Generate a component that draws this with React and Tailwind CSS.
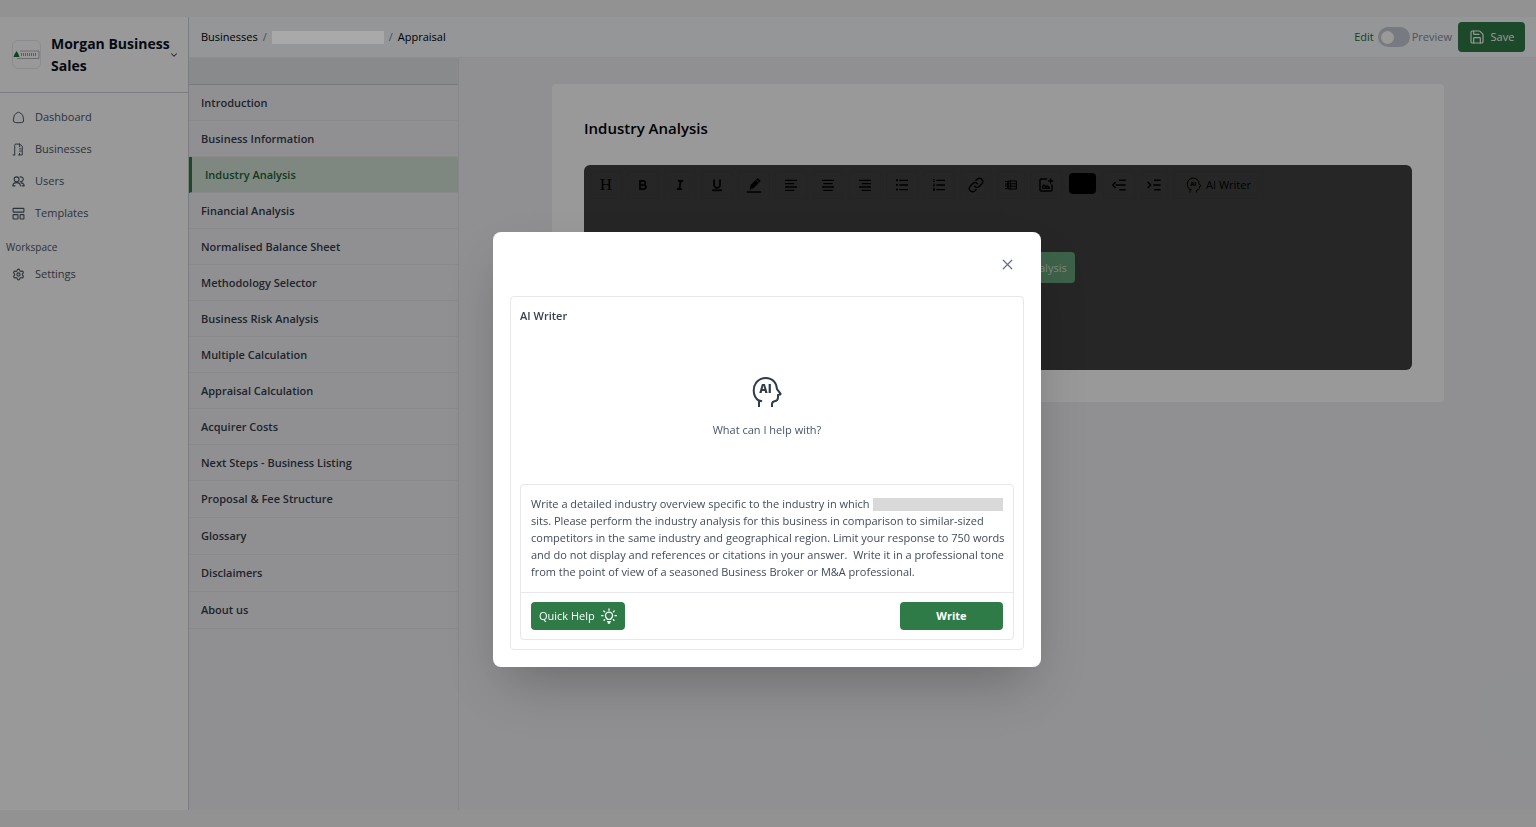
import { useState } from "react";
import { ChevronDown, Save, X, Settings } from "lucide-react";
import {
  RiAlignCenter,
  RiAlignLeft,
  RiAlignRight,
  RiBold,
  RiItalic,
  RiListOrdered,
  RiListUnordered,
  RiUnderline,
} from "react-icons/ri";

const PROMPT = `Write a detailed industry overview specific to the industry in which
sits. Please perform the industry analysis for this business in comparison to similar-sized
competitors in the same industry and geographical region. Limit your response to 750 words
and do not display and references or citations in your answer.  Write it in a professional tone
from the point of view of a seasoned Business Broker or M&A professional.`;

const sections = [
  { name: "Introduction" },
  { name: "Business Information" },
  { name: "Industry Analysis" },
  { name: "Financial Analysis" },
  { name: "Normalised Balance Sheet" },
  { name: "Methodology Selector" },
  { name: "Business Risk Analysis" },
  { name: "Multiple Calculation" },
  { name: "Appraisal Calculation" },
  { name: "Acquirer Costs" },
  { name: "Next Steps - Business Listing" },
  { name: "Proposal & Fee Structure", tall: true },
  { name: "Glossary", tall: true },
  { name: "Disclaimers", tall: true },
  { name: "About us", tall: true },
];

function Icon({ children, className = "size-4", viewBox = "0 0 24 24", width = 2 }) {
  return (
    <svg
      className={className}
      viewBox={viewBox}
      fill="none"
      stroke="currentColor"
      strokeWidth={width}
      strokeLinecap="round"
      strokeLinejoin="round"
      aria-hidden="true"
    >
      {children}
    </svg>
  );
}

const HomeIcon = () => (
  <Icon className="size-[13px]" width={1.8}>
    <path d="M10 2.900a3.400 3.400 0 0 1 4 0l4.500 3.300A4 4 0 0 1 20 9l1.500 7.500a4.500 4.500 0 0 1-4.500 5H7a4.500 4.500 0 0 1-4.500-5L4 9a4 4 0 0 1 1.500-2.800z" />
  </Icon>
);

const BuildingIcon = () => (
  <Icon className="size-[13px]" width={1.8}>
    <path d="M2 22h3M5 22V4a2 2 0 0 1 2-2h7l5 4v16h-7M14 2v5M14 11h3M14 15h3M14 19v3" />
  </Icon>
);

const UsersIcon = () => (
  <Icon className="size-[13px]">
    <circle cx="8.500" cy="8" r="4.500" />
    <path d="M1.500 20c0-4 3-6 7-6s7 2 7 6M1.500 20h4M15 3.700a4.500 4.500 0 1 1 0 8.600M17 14.500c3.500.5 5.500 2.500 5.500 5.500h-4" />
  </Icon>
);

const TemplatesIcon = () => (
  <Icon className="size-[13px]">
    <rect x="2" y="2.500" width="20" height="7" rx="1" />
    <rect x="2" y="14" width="9" height="8" rx="1" />
    <rect x="15" y="14" width="7" height="8" rx="1" />
  </Icon>
);

function AiHead({ className }) {
  return (
    <svg className={className} viewBox="0 0 30 32" fill="none" aria-hidden="true">
      <path
        d="M7 31v-6.500l3 .8M7 24.800C3.500 22.500 1.700 18.800 1.700 14.500 1.700 7.300 7 2 13.800 2c6.700 0 11 4.800 11.200 11.200l3.300 4.200c.4.6.2 1-.4 1.200L26 19v2.500c0 2.300-1.300 3.500-3.500 3.800-1.700.3-2.500 1.200-2.500 2.900V31"
        stroke="currentColor"
        strokeWidth="2"
        strokeLinejoin="round"
      />
      <text x="13.500" y="17" textAnchor="middle" fontFamily="Open Sans" fontWeight="800" fontSize="11.500" fill="currentColor">
        AI
      </text>
    </svg>
  );
}

const BulbIcon = () => (
  <Icon className="size-4" width={2}>
    <path d="M9.500 17c0-1.500-2.800-2.300-2.800-5.500a5.300 5.300 0 0 1 10.600 0c0 3.200-2.800 4-2.800 5.500zM10 20.500h4M11 22.500h2M12 1.500v1.800M4.200 4.500l1.300 1.300M19.800 4.500l-1.300 1.300M1 11.500h2M21 11.500h2M4.500 18.500l1-1M19.500 18.500l-1-1" />
  </Icon>
);

const LinkIcon = () => (
  <Icon width={2.2}>
    <path d="M10 14a5 5 0 0 0 7 0l4-4a5 5 0 0 0-7-7l-2 2M14 10a5 5 0 0 0-7 0l-4 4a5 5 0 0 0 7 7l2-2" />
  </Icon>
);

const PenIcon = () => (
  <Icon>
    <path d="M2 22.500h20" />
    <path d="M6 18l1.500-6 7-7 4 4-7 7zM16 3.500l1.500-1.500 4 4L20 7.500z" fill="currentColor" strokeWidth="1" />
  </Icon>
);

const TableIcon = () => (
  <Icon className="size-3" width={2.4}>
    <rect x="6" y="4" width="17" height="16" rx="2" />
    <path d="M6 9.500h17M6 14.500h17M11 4v16M1 5h5M1 10h5M1 14h5M1 19h5" />
  </Icon>
);

const ImageIcon = () => (
  <Icon width={2.2}>
    <path d="M13 3H5a2 2 0 0 0-2 2v14a2 2 0 0 0 2 2h14a2 2 0 0 0 2-2v-7M19 3v6M16 6h6M7 17v-3l2-2 3 3 2-2 3 3v1z" />
  </Icon>
);

const OutdentIcon = () => (
  <Icon width={2.2}>
    <path d="M7 7.500L2.500 12 7 16.500M12 5h10M13 12h7M7 12h15M12 19h10" strokeLinecap="butt" />
  </Icon>
);

const IndentIcon = () => (
  <Icon width={2.2}>
    <path d="M2.500 7.500L7 12l-4.500 4.500M12 5h10M11 12h11M12 19h10" strokeLinecap="butt" />
  </Icon>
);

function ToolButton({ label, narrow, children }) {
  return (
    <button
      type="button"
      aria-label={label}
      className={`flex h-7 items-center justify-center rounded border border-black/5 ${narrow ? "w-7" : "w-8"}`}
    >
      {children}
    </button>
  );
}

function NavLink({ icon, children }) {
  return (
    <a href="#" className="flex h-8 items-center gap-[10px] pl-3 text-[#4b5563]">
      {icon}
      {children}
    </a>
  );
}

function Sidebar() {
  return (
    <aside className="w-[189px] shrink-0 border-r border-[#cfd1d6] bg-white">
      <button type="button" className="flex h-[76px] w-full items-center border-b border-[#cfd1d6] pl-3 text-left">
        <span className="mr-[10px] flex size-[29px] shrink-0 items-center justify-center rounded-md border border-[#e8eaee]">
          <svg viewBox="0 0 27 10" className="w-[27px]" aria-hidden="true">
            <path d="M3.500 1l1.800 3 1.200 3H.5l1.200-3z" fill="#1d6b3c" />
            <path d="M4 8.500h22V1H7" fill="none" stroke="#a3a3a3" strokeWidth=".8" />
            <path d="M8.500 3v3m2-3v3m2-3v3m2-3v3m2-3v3m2-3v3m2-3v3m2-3v3" stroke="#999" strokeWidth="1" />
          </svg>
        </span>
        <span className="w-[118px] text-[14px] leading-[22px] font-bold whitespace-nowrap text-[#0b1223]">
          Morgan Business
          <br />
          Sales
        </span>
        <ChevronDown className="size-[10px] shrink-0 text-[#374151]" strokeWidth={2.5} />
      </button>
      <nav className="pt-2">
        <NavLink icon={<HomeIcon />}>Dashboard</NavLink>
        <NavLink icon={<BuildingIcon />}>Businesses</NavLink>
        <NavLink icon={<UsersIcon />}>Users</NavLink>
        <NavLink icon={<TemplatesIcon />}>Templates</NavLink>
        <p className="mt-2 mb-px pl-[6px] text-[10px] leading-5 text-[#4b5563]">Workspace</p>
        <NavLink icon={<Settings className="size-[13px]" />}>Settings</NavLink>
      </nav>
    </aside>
  );
}

function Header() {
  const [preview, setPreview] = useState(false);
  return (
    <header className="flex h-[41px] shrink-0 items-center justify-between border-b border-[#e9ebf0] bg-[#f8fafc] pr-[11px] pl-3">
      <nav aria-label="Breadcrumb" className="flex items-center gap-[5px] text-black">
        <a href="#">Businesses</a>
        <span className="text-[#7b8190]">/</span>
        <span className="relative z-30 h-[13px] w-28 bg-[#a8a9a8]" />
        <span className="text-[#7b8190]">/</span>
        <a href="#">Appraisal</a>
      </nav>
      <div className="flex items-center">
        <label htmlFor="preview" className="text-[#1f6b3b]">Edit</label>
        <span className="relative mr-[2px] ml-1 flex h-5 w-8">
          <input
            id="preview"
            type="checkbox"
            role="switch"
            checked={preview}
            onChange={() => setPreview(!preview)}
            className="peer h-5 w-8 appearance-none rounded-full bg-[#c6cbd8]"
          />
          <span className="pointer-events-none absolute top-1 left-[3px] size-[13px] rounded-full bg-white peer-checked:left-4" />
        </span>
        <label htmlFor="preview" className="text-[#858b99]">Preview</label>
        <button type="button" className="ml-[6px] flex h-[30px] w-[67px] items-center justify-center gap-[6px] rounded bg-[#2e7b47] text-white">
          <Save className="size-4" strokeWidth={1.75} />
          Save
        </button>
      </div>
    </header>
  );
}

function SectionNav() {
  const [active, setActive] = useState("Industry Analysis");
  return (
    <nav className="w-[270px] shrink-0 border-r border-[#e0e1e6]">
      <div className="h-[27px] border-b border-[#c9cbd0] bg-[#e4e6ea]" />
      {sections.map((s) => (
        <button
          key={s.name}
          type="button"
          onClick={() => setActive(s.name)}
          className={`flex w-full items-center border-b border-[#e6e6eb] font-semibold ${s.tall ? "h-[37px]" : "h-9"} ${
            s.name === active ? "border-l-[3px] border-l-[#2e7b47] bg-[#d2e3d5] pl-[13px] text-[#1f5f38]" : "pl-3 text-[#343b4a]"
          }`}
        >
          {s.name}
        </button>
      ))}
    </nav>
  );
}

function Editor() {
  return (
    <main className="relative min-w-0 flex-1 overflow-hidden pt-[26px] pr-[92px] pl-[93px]">
      <section className="rounded bg-white p-8">
        <h1 className="text-[15px] leading-6 font-semibold text-black">Industry Analysis</h1>
        <div className="mt-[25px] h-[205px] rounded-md bg-[#404040] pt-[6px] text-black">
          <div className="flex items-center gap-[5px] pl-[6px]">
            <ToolButton label="Heading">
              <span className="font-['Liberation_Serif'] text-[17px]">H</span>
            </ToolButton>
            <ToolButton label="Bold"><RiBold className="size-[14px]" stroke="currentColor" strokeWidth="1" /></ToolButton>
            <ToolButton label="Italic"><RiItalic className="size-[14px]" stroke="currentColor" strokeWidth="1" /></ToolButton>
            <ToolButton label="Underline"><RiUnderline className="size-[14px]" stroke="currentColor" strokeWidth="1" /></ToolButton>
            <ToolButton label="Highlight"><PenIcon /></ToolButton>
            <ToolButton label="Align left"><RiAlignLeft className="size-4" /></ToolButton>
            <ToolButton label="Align center"><RiAlignCenter className="size-4" /></ToolButton>
            <ToolButton label="Align right"><RiAlignRight className="size-4" /></ToolButton>
            <ToolButton label="Bullet list"><RiListUnordered className="size-4" /></ToolButton>
            <ToolButton label="Numbered list"><RiListOrdered className="size-4" /></ToolButton>
            <ToolButton label="Link"><LinkIcon /></ToolButton>
            <ToolButton label="Table" narrow><TableIcon /></ToolButton>
            <ToolButton label="Image"><ImageIcon /></ToolButton>
            <input
              type="color"
              aria-label="Text colour"
              defaultValue="#000000"
              className="mx-[2px] mb-1 h-[21px] w-[27px] overflow-hidden rounded-sm [&::-webkit-color-swatch]:border-0 [&::-webkit-color-swatch-wrapper]:p-0"
            />
            <ToolButton label="Outdent"><OutdentIcon /></ToolButton>
            <ToolButton label="Indent" narrow><IndentIcon /></ToolButton>
            <button type="button" className="flex h-7 items-center gap-1 rounded border border-black/5 px-3 whitespace-nowrap">
              <AiHead className="size-4" />
              AI Writer
            </button>
          </div>
          <div className="mt-[53px] flex justify-center">
            <button type="button" className="h-[31px] w-[153px] rounded bg-[#66a37a] whitespace-nowrap text-white/70">
              Generate Industry Analysis
            </button>
          </div>
        </div>
      </section>
      <div className="absolute right-[-24px] bottom-[54px] size-[84px] rounded-full bg-[#eef0f3]" />
    </main>
  );
}

function AiWriterModal() {
  const [prompt, setPrompt] = useState(PROMPT);
  return (
    <div className="fixed inset-0 z-40 flex items-start justify-center pt-[232px] pr-[2px]">
      <div role="dialog" aria-label="AI Writer" className="w-[548px] rounded-lg bg-white px-[17px] pb-[17px] shadow-2xl">
        <div className="flex h-16 items-center justify-end pr-2">
          <button type="button" aria-label="Close" className="text-[#64708a]">
            <X className="size-[17px]" strokeWidth={1.75} />
          </button>
        </div>
        <div className="rounded-sm border border-[#e5e7eb] p-[9px]">
          <h2 className="leading-5 font-semibold text-[#374151]">AI Writer</h2>
          <div className="flex h-[158px] flex-col items-center justify-center gap-3 pt-[6px] text-[#475569]">
            <AiHead className="h-8 w-[30px] text-[#2f3b4b]" />
            <p className="leading-5">What can I help with?</p>
          </div>
          <div className="rounded-sm border border-[#e5e7eb]">
            <div className="relative border-b border-[#e5e7eb]">
              <textarea
                aria-label="Prompt"
                spellCheck={false}
                value={prompt}
                onChange={(e) => setPrompt(e.target.value)}
                className="block h-[107px] w-full resize-none overflow-hidden px-[10px] pt-[10px] leading-[17px] whitespace-pre text-[#414b5a] outline-none"
              />
              <span className="absolute top-[13px] right-[10px] h-[13px] w-[130px] bg-[#d9d9d9]" />
            </div>
            <div className="flex items-center justify-between px-[10px] py-[9px]">
              <button type="button" className="flex h-[28px] items-center gap-[6px] rounded bg-[#2e7b47] px-2 text-white">
                Quick Help
                <BulbIcon />
              </button>
              <button type="button" className="h-[28px] w-[103px] rounded bg-[#2e7b47] font-bold text-white">
                Write
              </button>
            </div>
          </div>
        </div>
      </div>
    </div>
  );
}

export default function App() {
  return (
    <div className="flex h-screen flex-col bg-[#f3f3f3] py-[17px] font-['Open_Sans',sans-serif] text-[11px] leading-4">
      <div className="flex min-h-0 flex-1">
        <Sidebar />
        <div className="flex min-w-0 flex-1 flex-col bg-[#f1f1f4]">
          <Header />
          <div className="flex min-h-0 flex-1">
            <SectionNav />
            <Editor />
          </div>
        </div>
      </div>
      <div className="fixed inset-0 z-20 bg-black/40" />
      <AiWriterModal />
    </div>
  );
}
